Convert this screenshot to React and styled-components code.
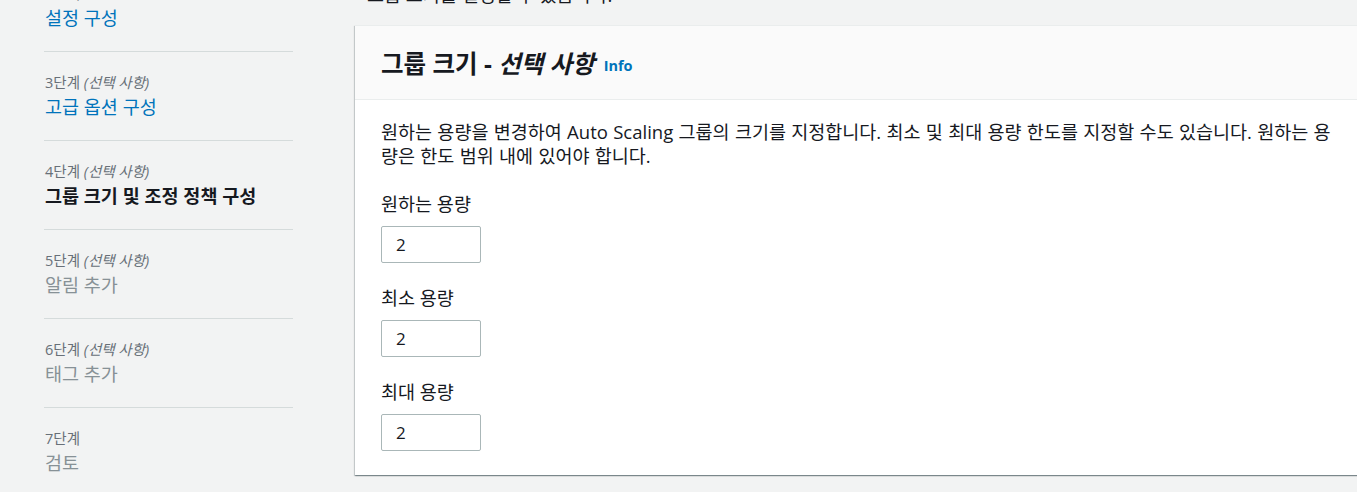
import React from 'react';
import styled, { createGlobalStyle } from 'styled-components';

const GlobalStyle = createGlobalStyle`
  html, body {
    margin: 0;
    padding: 0;
    overflow: hidden;
    background: #f2f3f3;
  }
  body {
    font-family: "Open Sans", "Noto Sans CJK KR", sans-serif;
    color: #16191f;
  }
`;

const Layout = styled.div`
  display: flex;
  align-items: flex-start;
  margin-top: -37px;
`;

const Sidebar = styled.nav`
  flex: 0 0 249px;
  margin-left: 44px;
`;

const Step = styled.div`
  padding: 20px 0 20px 1px;
  border-bottom: 1px solid #d5dbdb;

  &:last-child {
    border-bottom: none;
  }
`;

const StepLabel = styled.div`
  font-size: 14.5px;
  line-height: 22px;
  color: #687078;

  em {
    font-style: italic;
  }
`;

const StepTitle = styled.div`
  font-size: 18.5px;
  line-height: 26px;
  color: ${({ $state }) =>
    $state === 'done' ? '#0073bb' : $state === 'active' ? '#16191f' : '#879196'};
  font-weight: ${({ $state }) => ($state === 'active' ? 700 : 400)};
`;

const Main = styled.main`
  flex: 0 0 auto;
  margin-left: 62px;
  padding-top: 20px;
`;

const Intro = styled.p`
  margin: 0 0 18px 12px;
  font-size: 18.5px;
  line-height: 24px;
  color: #16191f;
`;

const Card = styled.section`
  width: 1012px;
  background: #ffffff;
  border-top: 1px solid #eaeded;
  box-shadow: 0 1px 1px 0 rgba(0, 28, 36, 0.3), 1px 1px 1px 0 rgba(0, 28, 36, 0.15),
    -1px 1px 1px 0 rgba(0, 28, 36, 0.15);
`;

const CardHeader = styled.header`
  height: 73px;
  display: flex;
  align-items: center;
  gap: 9px;
  padding: 0 26px;
  background: #fafafa;
  border-bottom: 1px solid #eaeded;
`;

const CardTitle = styled.h2`
  margin: 0;
  font-size: 24.5px;
  font-weight: 700;
  color: #16191f;

  em {
    font-style: italic;
  }
`;

const InfoLink = styled.a`
  font-size: 14.5px;
  font-weight: 700;
  color: #0073bb;
  text-decoration: none;
  margin-top: 5px;
`;

const CardBody = styled.div`
  padding: 20px 26px 24px;
`;

const Description = styled.p`
  margin: 0 0 24px;
  font-size: 18.5px;
  line-height: 24px;
  word-spacing: 0.5px;
`;

const Field = styled.div`
  display: flex;
  flex-direction: column;
  align-items: flex-start;
  gap: 10px;
  margin-bottom: 23px;

  &:last-child {
    margin-bottom: 0;
  }
`;

const FieldLabel = styled.label`
  font-size: 18.5px;
  line-height: 24px;
`;

const NumberInput = styled.input`
  box-sizing: border-box;
  width: 100px;
  height: 37px;
  padding: 0 14px;
  border: 1px solid #aab7b8;
  border-radius: 2px;
  font-family: "Open Sans", "Noto Sans CJK KR", sans-serif;
  font-size: 17px;
  color: #16191f;
  background: #fff;
  outline: none;
`;

const steps = [
  { n: 2, optional: false, title: '설정 구성', state: 'done' },
  { n: 3, optional: true, title: '고급 옵션 구성', state: 'done' },
  { n: 4, optional: true, title: '그룹 크기 및 조정 정책 구성', state: 'active' },
  { n: 5, optional: true, title: '알림 추가', state: 'todo' },
  { n: 6, optional: true, title: '태그 추가', state: 'todo' },
  { n: 7, optional: false, title: '검토', state: 'todo' },
];

const fields = [
  { id: 'desired', label: '원하는 용량', value: '2' },
  { id: 'min', label: '최소 용량', value: '2' },
  { id: 'max', label: '최대 용량', value: '2' },
];

const App = () => {
  return (
    <>
      <GlobalStyle />
      <Layout>
        <Sidebar>
          {steps.map(step => (
            <Step key={step.n}>
              <StepLabel>
                {step.n}단계{step.optional && <> <em>(선택 사항)</em></>}
              </StepLabel>
              <StepTitle $state={step.state}>{step.title}</StepTitle>
            </Step>
          ))}
        </Sidebar>
        <Main>
          <Intro>그룹 크기를 설정할 수 있습니다.</Intro>
          <Card>
            <CardHeader>
              <CardTitle>
                그룹 크기 - <em>선택 사항</em>
              </CardTitle>
              <InfoLink href="#">Info</InfoLink>
            </CardHeader>
            <CardBody>
              <Description>
                원하는 용량을 변경하여 Auto Scaling 그룹의 크기를 지정합니다. 최소 및 최대 용량 한도를 지정할 수도
                있습니다. 원하는 용량은 한도 범위 내에 있어야 합니다.
              </Description>
              {fields.map(f => (
                <Field key={f.id}>
                  <FieldLabel htmlFor={f.id}>{f.label}</FieldLabel>
                  <NumberInput id={f.id} type="text" defaultValue={f.value} />
                </Field>
              ))}
            </CardBody>
          </Card>
        </Main>
      </Layout>
    </>
  );
};

export default App;
